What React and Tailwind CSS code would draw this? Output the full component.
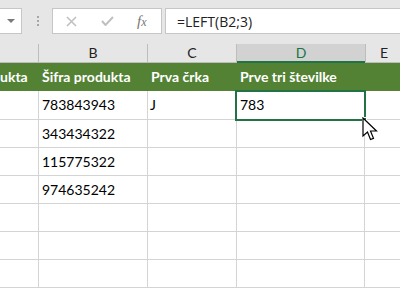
import React from "react";

export default function App() {
  const rows = [
    ["", "783843943", "J", ""],
    ["", "343434322", "", ""],
    ["", "115775322", "", ""],
    ["", "974635242", "", ""],
    ["", "", "", ""],
    ["", "", "", ""],
    ["", "", "", ""],
  ];
  return (
    <div className="relative w-[400px] h-[300px] overflow-hidden bg-white font-['Lato','Liberation_Sans',sans-serif] text-black">
      {/* toolbar */}
      <div className="h-[44px] bg-[#e6e6e6] flex items-start pt-[8px]">
        <div className="w-[22px] h-[26px] bg-white border border-l-0 border-[#c6c6c6] flex items-center justify-end pr-[6px]">
          <svg width="8" height="5" viewBox="0 0 8 5"><path d="M0 0 H8 L4 4 Z" fill="#7a7a7a" /></svg>
        </div>
        <div className="ml-[14px] w-[3px] h-[26px] flex flex-col items-center justify-center gap-[2px]">
          <div className="w-[2px] h-[2px] bg-[#a6a6a6]" />
          <div className="w-[2px] h-[2px] bg-[#a6a6a6]" />
          <div className="w-[2px] h-[2px] bg-[#a6a6a6]" />
        </div>
        <div className="ml-[13px] w-[110px] h-[26px] bg-white border border-[#c6c6c6] flex items-center">
          <svg className="ml-[13px]" width="11" height="11" viewBox="0 0 11 11"><path d="M1 1 L10 10 M10 1 L1 10" stroke="#c0c0c0" strokeWidth="1.6" /></svg>
          <svg className="ml-[24px]" width="13" height="10" viewBox="0 0 13 10"><path d="M1 5 L4.5 9 L12 1" stroke="#c0c0c0" strokeWidth="2" fill="none" /></svg>
          <span className="ml-[23px] font-['Liberation_Serif',serif] italic text-[15px] text-[#767676] leading-none">f<span className="text-[12px]">x</span></span>
        </div>
        <div className="ml-[3px] flex-1 h-[26px] bg-white border border-r-0 border-[#c6c6c6] flex items-center pl-[11px] text-[14px] font-['Open_Sans',sans-serif] text-[#222]">
          =LEFT(B2;3)
        </div>
      </div>
      {/* column headers */}
      <div className="flex h-[19px] bg-[#e6e6e6] text-[14px] text-[#222] leading-none">
        <div className="w-[39px] shrink-0 border-r border-b border-[#bdbdbd]" />
        <div className="w-[109px] shrink-0 border-r border-b border-[#bdbdbd] flex items-center justify-center">B</div>
        <div className="w-[89px] shrink-0 border-r border-b border-[#bdbdbd] flex items-center justify-center">C</div>
        <div className="w-[128px] shrink-0 bg-[#d2d2d2] border-b-2 border-[#217346] flex items-center justify-center text-[#217346]">D</div>
        <div className="flex-1 border-l border-b border-[#bdbdbd] flex items-center justify-center pl-[2px]">E</div>
      </div>
      {/* green header */}
      <div className="flex h-[28px] bg-[#548235] text-white font-bold text-[14px] leading-none">
        <div className="w-[39px] shrink-0 flex items-center whitespace-nowrap">ukta</div>
        <div className="w-[109px] shrink-0 flex items-center pl-[3px] whitespace-nowrap">Šifra produkta</div>
        <div className="w-[89px] shrink-0 flex items-center pl-[3px] whitespace-nowrap">Prva črka</div>
        <div className="w-[128px] shrink-0 flex items-center pl-[3px] whitespace-nowrap">Prve tri številke</div>
        <div className="flex-1" />
      </div>
      {/* rows */}
      {rows.map((r, i) => (
        <div key={i} className={`flex ${i === 0 ? "h-[29px]" : "h-[28px]"} text-[14px] leading-none`}>
          <div className="w-[39px] shrink-0 border-r border-b border-[#d4d4d4]" />
          <div className="w-[109px] shrink-0 border-r border-b border-[#d4d4d4] flex items-center pl-[3px]">{r[1]}</div>
          <div className="w-[89px] shrink-0 border-r border-b border-[#d4d4d4] flex items-center pl-[2px]">{r[2]}</div>
          <div className="w-[128px] shrink-0 border-r border-b border-[#d4d4d4] flex items-center pl-[3px]">{i === 0 ? "783" : ""}</div>
          <div className="flex-1 border-b border-[#d4d4d4]" />
        </div>
      ))}
      {/* selection */}
      <div className="absolute left-[235px] top-[90px] w-[131px] h-[31px] border-2 border-[#217346]" />
      <div className="absolute left-[362px] top-[117px] w-[5px] h-[5px] bg-[#217346] border border-white" />
      {/* cursor */}
      <svg className="absolute left-[362px] top-[117px]" width="16" height="24" viewBox="0 0 16 24">
        <path d="M1 1 L1 19 L5.5 15 L8.5 22.5 L11.5 21.3 L8.5 14 L14.5 14 Z" fill="white" stroke="black" strokeWidth="1.2" strokeLinejoin="miter" />
      </svg>
    </div>
  );
}
